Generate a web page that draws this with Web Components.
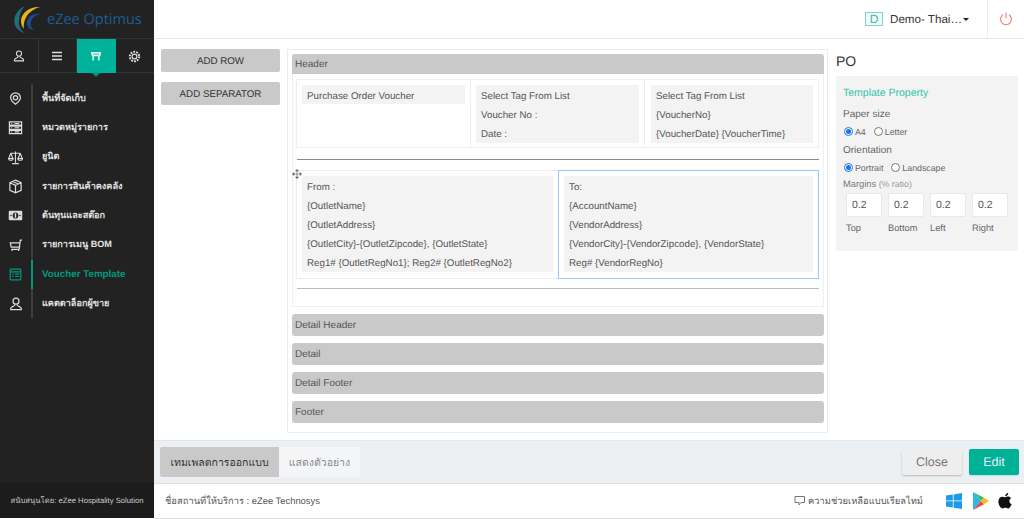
<!DOCTYPE html>
<html><head><meta charset="utf-8">
<style>
html,body{margin:0;padding:0;height:519px;overflow:hidden;background:#fff;font-family:"Liberation Sans","Noto Sans",sans-serif;text-rendering:geometricPrecision}
</style></head><body>
<app-root></app-root>
<script>
const I={
pin:'<path d="M8 1a6 6 0 0 0-6 6c0 3.500 3.800 6.300 6 8 2.200-1.700 6-4.500 6-8a6 6 0 0 0-6-6z" fill="none" stroke="currentColor" stroke-width="1.500"/><circle cx="8" cy="7" r="2.600" fill="none" stroke="currentColor" stroke-width="1.500"/>',
rows:'<path d="M1.500 2h13v3.500h-13zM1.500 6.500h13V10h-13zM1.500 11h13v3.500h-13z" fill="none" stroke="currentColor" stroke-width="1.300"/><path d="M3.500 3.700h1M7 3.700h5M3.500 8.200h1M7 8.200h5M3.500 12.700h1M7 12.700h5" stroke="currentColor" stroke-width="1.200"/>',
scale:'<path d="M8 1.500v12M4.500 14.500h7M3 3.500h10M3 3.500L.8 9M3 3.500L5.200 9M13 3.500L10.800 9M13 3.500L15.200 9" fill="none" stroke="currentColor" stroke-width="1.200"/><path d="M.5 9h5c0 2.500-5 2.500-5 0zM10.500 9h5c0 2.500-5 2.500-5 0z" fill="none" stroke="currentColor" stroke-width="1.200"/>',
box:'<path d="M8 1.200l6 2.800v8L8 14.800 2 12V4zM2 4l6 2.800L14 4M8 6.800v8M5 2.600l6 2.800" fill="none" stroke="currentColor" stroke-width="1.300"/>',
cash:'<rect x=".8" y="3" width="14.400" height="10" rx="1" fill="currentColor"/><ellipse cx="8" cy="8" rx="3" ry="3.300" fill="#222"/><path d="M8 5.500v5" stroke="currentColor" stroke-width="1.500"/><circle cx="3.200" cy="8" r=".8" fill="#222"/><circle cx="12.800" cy="8" r=".8" fill="#222"/>',
cart:'<path d="M15 2.500h-2l-.5 3H1.500l1 5h9.200M12.500 5.500l-.8 7.500M11.700 13h-9" fill="none" stroke="currentColor" stroke-width="1.400"/><path d="M3.500 13v1.800M11 13v1.800" stroke="currentColor" stroke-width="1.400"/>',
form:'<rect x="1.500" y="1.500" width="13" height="13" rx="1" fill="none" stroke="currentColor" stroke-width="1.500"/><path d="M1.500 4.800h13M4 7.500h2M7.500 7.500h5M4 10.500h2M7.500 10.500h5" stroke="currentColor" stroke-width="1.400"/>',
user:'<circle cx="8" cy="4.800" r="3.400" fill="none" stroke="currentColor" stroke-width="1.400"/><path d="M6.500 8.200v1.300c0 1.200-4.500 1.500-4.500 3.500v1.500h12V13c0-2-4.500-2.300-4.500-3.500V8.200" fill="none" stroke="currentColor" stroke-width="1.400"/>'
};
const SZ={pin:13,rows:15,scale:15,box:15,cash:15,cart:14,form:13,user:14};
const svg=(n,s)=>{s=s||SZ[n]||15;return `<svg width="${s}" height="${s}" viewBox="0 0 16 16">${I[n]}</svg>`};
const THAI='"Liberation Sans","Noto Sans CJK SC",sans-serif';

customElements.define('side-item',class extends HTMLElement{
 connectedCallback(){const a=this.hasAttribute('active');
 this.attachShadow({mode:'open'}).innerHTML=`<style>
 :host{display:flex;height:29.300px;align-items:center;color:#e4e4e4;font:700 9.100px ${THAI};white-space:nowrap}
 :host([active]){color:#00997f;font-size:9.800px}
 .i{width:31px;flex:none;display:flex;justify-content:center;color:${a?'#00997f':'#dcdcdc'}}
 .t{flex:1;height:100%;display:flex;align-items:center;padding-left:9px;border-left:2px solid ${a?'#00997f':'#3d3d3d'}}
 </style><div class="i">${svg(this.getAttribute('icon'))}</div><div class="t"><slot></slot></div>`;}
});
customElements.define('app-sidebar',class extends HTMLElement{
 connectedCallback(){
 this.attachShadow({mode:'open'}).innerHTML=`<style>
 :host{display:flex;flex-direction:column;width:154px;flex:none;background:#222;height:518px}
 .logo{height:38px;display:flex;align-items:center;gap:6px;padding-left:13px;border-bottom:1px solid #333;color:#1d5c96;font:14.500px "Open Sans","Liberation Sans",sans-serif;white-space:nowrap}
 .tabs{display:grid;grid-template-columns:repeat(4,1fr);height:33px;border-bottom:1px solid #333;position:relative}
 .tabs div{display:flex;align-items:center;justify-content:center;color:#ddd;border-right:1px solid #333}
 .tabs div:last-child{border:0}
 .tabs .on{background:#00b29a;color:#d8f5ef;border:0;position:relative;height:34px}
 .on:after{content:"";position:absolute;left:50%;margin-left:-4px;top:100%;border:4px solid transparent;border-top-color:#00917d;border-bottom:0}
 nav{padding-top:11px;flex:1}
 .foot{height:35px;background:#1c1c1c;color:#ccc;font:7.700px ${THAI};display:flex;align-items:center;justify-content:center;white-space:nowrap}
 </style>
 <div class="logo"><svg width="28" height="29" viewBox="0 0 28 29"><path d="M12 1C4 5 .5 11 1.500 18c.5 4 4 8 10 10-4-3-6-7-5.500-12C6.300 10 8 5 12 1z" fill="#1f6f78"/><path d="M27 2C17 1 8 8 8 16c0 3 1 6 3 8-1-7 2-18 16-22z" fill="#e8b417"/><path d="M27 9c-7-1-13 3-13 9 0 4 3 7 7 7-3-2-4-5-3-9 1-3 5-6 9-7z" fill="#1d4c8c"/></svg><span>eZee Optimus</span></div>
 <div class="tabs">
 <div>${svg('user',12)}</div>
 <div><svg width="12" height="12" viewBox="0 0 12 12"><path d="M1 2.500h10M1 6h10M1 9.500h10" stroke="currentColor" stroke-width="1.500"/></svg></div>
 <div class="on"><svg width="10" height="10" viewBox="0 0 16 16"><path d="M1 3h14l-1 4H2.500zM3.500 7v8M12.500 7v8" fill="none" stroke="currentColor" stroke-width="2.500"/></svg></div>
 <div><svg width="13" height="13" viewBox="0 0 16 16"><circle cx="8" cy="8" r="3" fill="none" stroke="currentColor" stroke-width="1.500"/><circle cx="8" cy="8" r="5.800" fill="none" stroke="currentColor" stroke-width="2.400" stroke-dasharray="2.200 1.400"/></svg></div>
 </div>
 <nav><slot></slot></nav>
 <div class="foot">สนับสนุนโดย: eZee Hospitality Solution</div>`;}
});
customElements.define('top-bar',class extends HTMLElement{
 connectedCallback(){
 this.attachShadow({mode:'open'}).innerHTML=`<style>
 :host{display:flex;height:38px;flex:none;border-bottom:1px solid #e4e8ee;align-items:center;justify-content:flex-end;color:#333;font-size:11.600px}
 .d{width:16px;height:12px;border:1px solid #7fd6c8;background:#f3fbfa;color:#3cb9a6;display:flex;align-items:center;justify-content:center;font-size:12px;margin-right:7px}
 .c{width:0;height:0;border:3px solid transparent;border-top-color:#222;border-bottom:0;margin-left:1px;margin-top:1px}
 .p{width:36px;height:100%;margin-left:18px;border-left:1px solid #eceef1;display:flex;align-items:center;justify-content:center;color:#f27a7a}
 </style><div class="d">D</div><span>Demo- Thai…</span><div class="c"></div>
 <div class="p"><svg width="14" height="14" viewBox="0 0 14 14"><path d="M4 2.800a5.400 5.400 0 1 0 6 0M7 .8v5.500" fill="none" stroke="currentColor" stroke-width="1.100"/></svg></div>`;}
});
customElements.define('gray-btn',class extends HTMLElement{
 connectedCallback(){
 this.attachShadow({mode:'open'}).innerHTML=`<style>
 :host{display:flex;height:23px;box-sizing:border-box;padding-top:1px;align-items:center;justify-content:center;background:#c9c9c9;border-radius:2px;color:#333;font-size:9.750px}
 </style><slot></slot>`;}
});
customElements.define('sec-bar',class extends HTMLElement{
 connectedCallback(){
 this.attachShadow({mode:'open'}).innerHTML=`<style>
 :host{display:flex;height:20px;box-sizing:border-box;padding:1px 0 0 3px;align-items:center;background:#c9c9c9;border-radius:3px 3px 0 0;color:#555;font-size:10px}
 :host([solo]){border-radius:3px;height:22px}
 </style><slot></slot>`;}
});
customElements.define('tag-box',class extends HTMLElement{
 connectedCallback(){
 this.attachShadow({mode:'open'}).innerHTML=`<style>
 :host{display:block;box-sizing:border-box;height:calc(var(--lines,1)*19.200px);background:#f3f3f3;color:#555;font-size:9.750px;line-height:19.200px;padding:1.500px 5px 0;white-space:nowrap}
 ::slotted(div){height:19.200px}
 </style><slot></slot>`;}
});
customElements.define('radio-opt',class extends HTMLElement{
 connectedCallback(){const c=this.hasAttribute('checked');
 this.attachShadow({mode:'open'}).innerHTML=`<style>
 :host{display:inline-flex;align-items:center;gap:2px;color:#666;font-size:8.800px}
 .r{width:7px;height:7px;border:1px solid ${c?'#1a73e8':'#777'};border-radius:50%;display:flex;align-items:center;justify-content:center;background:#fff}
 .r i{width:5px;height:5px;border-radius:50%;background:${c?'#1a73e8':'transparent'}}
 </style><span class="r"><i></i></span><slot></slot>`;}
});
customElements.define('margin-input',class extends HTMLElement{
 connectedCallback(){
 this.attachShadow({mode:'open'}).innerHTML=`<style>
 :host{display:block;color:#666;font-size:9.300px}
 .b{height:24px;box-sizing:border-box;background:#fff;border:1px solid #e8e8e8;border-radius:2px;display:flex;align-items:center;padding-left:5px;font-size:10.500px;color:#555;margin-bottom:6px}
 </style><div class="b">0.2</div><span><slot></slot></span>`;}
});
customElements.define('property-panel',class extends HTMLElement{
 connectedCallback(){
 this.attachShadow({mode:'open'}).innerHTML=`<style>
 :host{display:block;width:182px;flex:none;margin-left:8px}
 h2{font:400 14px "Liberation Sans",sans-serif;color:#333;margin:14px 0 7px;line-height:16px}
 .p{background:#f3f3f3;height:175px;box-sizing:border-box;padding:11px 7px}
 .t{color:#2fc4ac;font-size:10.500px;line-height:13px;margin-bottom:9px}
 .l{color:#666;font-size:10px;line-height:12px}
 .rs{display:flex;gap:8px;height:13px;margin:4px 0 7px 1px;align-items:center}
 .rs.b{margin-bottom:5px}
 .m{color:#777;font-size:9.300px;line-height:12px;margin-top:-1px}.m small{color:#999;font-size:8.800px}
 .g{display:grid;grid-template-columns:repeat(4,36px);column-gap:6px;margin:3px 0 0 3px}
 </style>
 <h2>PO</h2>
 <div class="p"><div class="t">Template Property</div>
 <div class="l">Paper size</div>
 <div class="rs"><radio-opt checked>A4</radio-opt><radio-opt>Letter</radio-opt></div>
 <div class="l">Orientation</div>
 <div class="rs b"><radio-opt checked>Portrait</radio-opt><radio-opt>Landscape</radio-opt></div>
 <div class="m">Margins <small>(% ratio)</small></div>
 <div class="g"><margin-input>Top</margin-input><margin-input>Bottom</margin-input><margin-input>Left</margin-input><margin-input>Right</margin-input></div>
 </div>`;}
});
customElements.define('voucher-canvas',class extends HTMLElement{
 connectedCallback(){
 this.attachShadow({mode:'open'}).innerHTML=`<style>
 :host{display:block;width:541px;height:384px;box-sizing:border-box;border:1px solid #e9edf3;padding:4px 3px 0 4px;flex:none;margin-left:7px;margin-top:10px;background:#fff}
 .hd{height:233px;border:1px solid #eef0f3;border-top:0;box-sizing:border-box;padding:5px 4px 0 3px;margin-bottom:7px;position:relative}
 .r3{display:grid;grid-template-columns:174px 174px 1fr;height:69px;border:1px solid #eee;box-sizing:border-box}
 .c{padding:5px;border-right:1px solid #eee}
 .c:last-child{border:0;padding-left:6px}
 hr{border:0;border-top:1px solid #8a8a8a;margin:11px 0 10px 1px}
 hr.l{border-top-color:#bbb;margin:9px 0 0 1px}
 .r2{display:grid;grid-template-columns:261px 1fr;height:109px;box-sizing:border-box;border:1px solid #eee;border-right:0}
 .c2{padding:5px;box-sizing:border-box;height:107px}
 .sel{border:1px solid #9cc8f5;margin-top:-1px;height:109px}
 .mv{position:absolute;left:-1px;top:92px;color:#666}
 sec-bar[solo]{margin-bottom:7px}
 </style>
 <sec-bar>Header</sec-bar>
 <div class="hd">
 <div class="r3">
 <div class="c"><tag-box style="--lines:1">Purchase Order Voucher</tag-box></div>
 <div class="c"><tag-box style="--lines:3"><div>Select Tag From List</div><div>Voucher No :</div><div>Date :</div></tag-box></div>
 <div class="c"><tag-box style="--lines:3"><div>Select Tag From List</div><div>{VoucherNo}</div><div>{VoucherDate} {VoucherTime}</div></tag-box></div>
 </div>
 <hr>
 <div class="mv"><svg width="10" height="10" viewBox="0 0 10 10"><path d="M5 .5v9M.5 5h9M5 .5L3.500 2h3zM5 9.500L3.500 8h3zM.5 5L2 3.500v3zM9.500 5L8 3.500v3z" fill="currentColor" stroke="currentColor" stroke-width=".6"/></svg></div>
 <div class="r2">
 <div class="c2"><tag-box style="--lines:5"><div>From :</div><div>{OutletName}</div><div>{OutletAddress}</div><div>{OutletCity}-{OutletZipcode}, {OutletState}</div><div>Reg1# {OutletRegNo1}; Reg2# {OutletRegNo2}</div></tag-box></div>
 <div class="c2 sel"><tag-box style="--lines:5"><div>To:</div><div>{AccountName}</div><div>{VendorAddress}</div><div>{VendorCity}-{VendorZipcode}, {VendorState}</div><div>Reg# {VendorRegNo}</div></tag-box></div>
 </div>
 <hr class="l">
 </div>
 <sec-bar solo>Detail Header</sec-bar>
 <sec-bar solo>Detail</sec-bar>
 <sec-bar solo>Detail Footer</sec-bar>
 <sec-bar solo>Footer</sec-bar>`;}
});
customElements.define('action-bar',class extends HTMLElement{
 connectedCallback(){
 this.attachShadow({mode:'open'}).innerHTML=`<style>
 :host{display:flex;height:42px;flex:none;background:#edf0f3;border-top:1px solid #e4e6e9;border-bottom:1px solid #dfe1e4;align-items:center;padding:0 5px 0 6px;font-size:10.500px}
 .tab{height:30px;display:flex;align-items:center;justify-content:center;box-sizing:border-box;font-family:${THAI}}
 .a{width:119px;background:#c9c9c9;color:#333;border-radius:2px 0 0 2px}
 .b{width:81px;background:#f4f5f6;color:#8b8b8b;border-radius:0 2px 2px 0}
 .sp{flex:1}
 .btn{height:26px;display:flex;align-items:center;justify-content:center;border-radius:2px;font-size:12.500px}
 .cl{width:60px;background:#eee;color:#777;box-shadow:0 1px 2px #bbb;margin-right:7px}
 .ed{width:50px;background:#00b295;color:#eef;box-shadow:0 1px 2px #bde}
 </style><div class="tab a">เทมเพลตการออกแบบ</div><div class="tab b">แสดงตัวอย่าง</div><div class="sp"></div><div class="btn cl">Close</div><div class="btn ed">Edit</div>`;}
});
customElements.define('foot-bar',class extends HTMLElement{
 connectedCallback(){
 this.attachShadow({mode:'open'}).innerHTML=`<style>
 :host{display:flex;height:34px;flex:none;align-items:center;padding:0 12px 0 11px;color:#555;font:9.400px ${THAI};border-bottom:1px solid #ddd}
 .sp{flex:1}.h{display:flex;align-items:center;gap:2px;margin-right:23px;font-size:9.350px}
 .ic{display:flex;align-items:center;gap:9px}
 .ic svg:first-child{margin-right:1px}
 </style><span>ชื่อสถานที่ให้บริการ : eZee Technosys</span><div class="sp"></div>
 <div class="h"><svg width="12" height="12" viewBox="0 0 12 12"><path d="M1 1.500h9.500v6H7l-2 2.500V7.500H1z" fill="none" stroke="#777" stroke-width="1"/></svg><span>ความช่วยเหลือแบบเรียลไทม์</span></div>
 <div class="ic">
 <svg width="16" height="16" viewBox="0 0 16 16"><path d="M0 2.500l6.800-1v6H0zM7.600 1.400L16 0v7.500H7.600zM0 8.300h6.800v6.200L0 13.500zM7.600 8.300H16V16l-8.400-1.300z" fill="#1e9be8"/></svg>
 <svg width="17" height="18" viewBox="0 0 17 18"><path d="M1 0v18l8-9z" fill="#2bb8e8"/><path d="M1 0l8 9 3-3.200z" fill="#3dbb6c"/><path d="M1 18l8-9 3 3.200z" fill="#e8483f"/><path d="M12 5.800L9 9l3 3.200L17 9z" fill="#f9bd14"/></svg>
 <svg width="14" height="16" viewBox="0 0 15 17"><path d="M11 0c0 2-1.500 3.500-3.300 3.500C7.700 1.700 9.200.2 11 0zM7.800 4.400c1 0 1.800-.7 3-.7 1.300 0 2.500.7 3.200 1.800-2.700 1.500-2.300 5.300.6 6.400-.8 2-2.300 4.600-3.800 4.600-1.200 0-1.500-.7-2.900-.7s-1.800.7-2.900.7C3 16.500.4 12.500.4 9.300.4 6 2.500 3.900 4.600 3.900c1.300 0 2.300.5 3.200.5z" fill="#111"/></svg>
 </div>`;}
});
customElements.define('app-root',class extends HTMLElement{
 connectedCallback(){
 this.attachShadow({mode:'open'}).innerHTML=`<style>
 :host{display:flex;width:1024px;height:519px;overflow:hidden}
 main{flex:1;display:flex;flex-direction:column;min-width:0}
 .body{flex:1;display:flex;padding-left:7px;min-height:0;background:#fff}
 .left{width:119px;flex:none;padding-top:10px;display:flex;flex-direction:column;gap:10px}
 </style>
 <app-sidebar>
 <side-item icon="pin">พื้นที่จัดเก็บ</side-item>
 <side-item icon="rows">หมวดหมู่รายการ</side-item>
 <side-item icon="scale">ยูนิต</side-item>
 <side-item icon="box">รายการสินค้าคงคลัง</side-item>
 <side-item icon="cash">ต้นทุนและสต๊อก</side-item>
 <side-item icon="cart">รายการเมนู BOM</side-item>
 <side-item icon="form" active>Voucher Template</side-item>
 <side-item icon="user">แคตตาล็อกผู้ขาย</side-item>
 </app-sidebar>
 <main>
 <top-bar></top-bar>
 <div class="body">
 <div class="left"><gray-btn>ADD ROW</gray-btn><gray-btn>ADD SEPARATOR</gray-btn></div>
 <voucher-canvas></voucher-canvas>
 <property-panel></property-panel>
 </div>
 <action-bar></action-bar>
 <foot-bar></foot-bar>
 </main>`;}
});
</script>
</body></html>
